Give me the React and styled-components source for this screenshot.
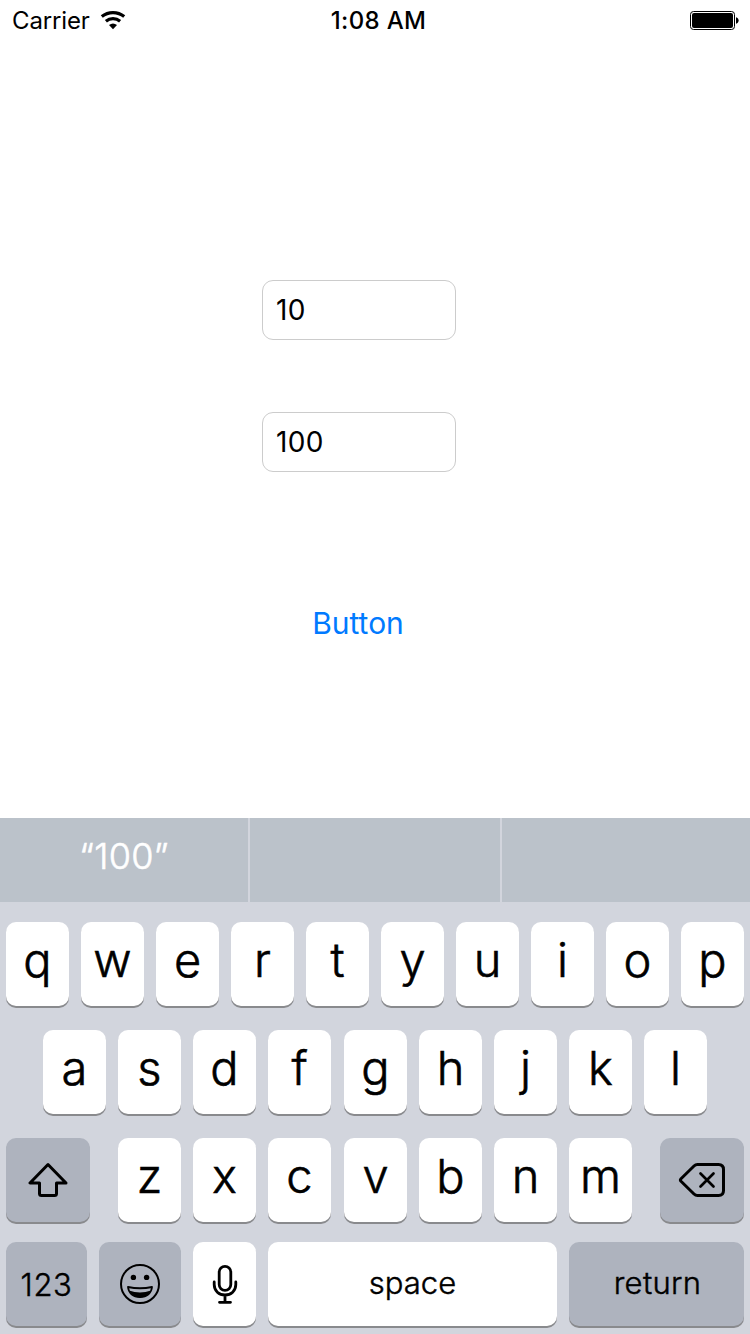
import React from "react";
import styled, { createGlobalStyle, css } from "styled-components";

const GlobalStyle = createGlobalStyle`
  * { box-sizing: border-box; }
  html, body { margin: 0; padding: 0; background: #fff; }
  button, input { font: inherit; color: inherit; margin: 0; border: 0; padding: 0; background: none; }
  svg { display: block; }
`;

const Screen = styled.div`
  width: 750px;
  height: 1334px;
  display: flex;
  flex-direction: column;
  overflow: hidden;
  background: #fff;
  color: #000;
  font-family: Inter, "Liberation Sans", sans-serif;
`;

const StatusBar = styled.header`
  height: 40px;
  display: grid;
  grid-template-columns: 1fr auto 1fr;
  align-items: center;
  padding: 0 11px 0 12px;
  font-size: 24px;
  line-height: 30px;
`;

const Carrier = styled.div`
  display: flex;
  align-items: center;
  gap: 10px;
  letter-spacing: -0.15px;
  padding-top: 2px;

  svg {
    margin-top: -2px;
  }
`;

const Clock = styled.time`
  font-weight: 550;
  letter-spacing: 0.35px;
  padding: 2px 0 0 6px;
`;

const BatterySlot = styled.div`
  display: flex;
  justify-content: flex-end;
  padding-top: 1px;
`;

const Form = styled.main`
  flex: 1;
  display: flex;
  flex-direction: column;
  align-items: center;
  padding: 240px 32px 0 0;
`;

const Field = styled.input`
  width: 194px;
  height: 60px;
  margin-bottom: 72px;
  padding: 0 13px;
  border: 1px solid #ccc;
  border-radius: 11px;
  font-size: 28px;
  letter-spacing: 0.3px;
  outline: none;
`;

const TextButton = styled.button`
  margin: 61px 2px 0 0;
  color: #007aff;
  font-size: 30px;
  line-height: 36px;
`;

const Keyboard = styled.section`
  height: 516px;
  background: #d2d5dd;
`;

const Suggestions = styled.div`
  height: 84px;
  display: grid;
  grid-template-columns: 248px 250px 248px;
  gap: 2px;
`;

const Suggestion = styled.div`
  background: #bbc2ca;
  color: #fff;
  display: flex;
  align-items: center;
  justify-content: center;
  padding-bottom: 8px;
  font-size: 36px;
  font-weight: 300;
  letter-spacing: 0.3px;
  -webkit-text-stroke: 0.6px currentColor;
`;

const Keys = styled.div`
  display: flex;
  flex-direction: column;
  padding-top: 20px;
`;

const Row = styled.div`
  display: flex;
  justify-content: space-between;
  height: 84px;
  padding: 0 ${(p) => p.$inset ?? 6}px;
  margin-bottom: ${(p) => p.$after ?? 24}px;
`;

const Group = styled.div`
  display: flex;
  gap: ${(p) => p.$gap ?? 12}px;
`;

const Key = styled.button`
  width: ${(p) => p.$width ?? 63}px;
  height: 84px;
  display: flex;
  align-items: center;
  justify-content: center;
  border-radius: 10px;
  background: ${(p) => (p.$dark ? "#aeb3be" : "#fff")};
  box-shadow: 0 2px 0 #898a8d;
  ${(p) =>
    p.$label
      ? css`
          font-size: 31px;
          font-weight: 300;
          padding: 0 0 ${p.$lift ?? 3}px ${p.$shift ?? 0}px;
          letter-spacing: ${p.$track ?? 0}px;
          -webkit-text-stroke: 0.45px currentColor;
        `
      : css`
          font-size: 47px;
          font-weight: 300;
          padding-bottom: ${p.$icon ? 0 : 10}px;
          -webkit-text-stroke: 0.6px currentColor;
        `}
`;

const Letters = ({ text }) => (
  <Group>
    {text.split("").map((c) => (
      <Key key={c}>{c}</Key>
    ))}
  </Group>
);

const WifiIcon = () => (
  <svg width="26" height="20" viewBox="0 0.4 26 20" fill="none" stroke="#000">
    <path d="M1.800 7A17.700 17.700 0 0 1 24.200 7" strokeWidth="3.200" />
    <path d="M5.900 11.600A11 11 0 0 1 20.100 11.600" strokeWidth="3.200" />
    <path d="M9 15.400A6.500 6.500 0 0 1 17 15.400L13 19.600Z" fill="#000" stroke="none" />
  </svg>
);

const BatteryIcon = () => (
  <svg width="49" height="19" viewBox="0 0 49 19">
    <rect x="0.500" y="0.500" width="44" height="18" rx="3" fill="none" stroke="#000" />
    <rect x="2" y="2" width="41" height="15" rx="2" />
    <path d="M46 6.200C49.500 6.800 49.500 12.200 46 12.800Z" />
  </svg>
);

const ShiftIcon = () => (
  <svg width="40" height="36" viewBox="0 0 40 36" fill="none" stroke="#000" strokeWidth="3" strokeLinejoin="round">
    <path d="M20 2.500 L2 21 H11.500 V31.500 Q11.500 33.500 13.500 33.500 H26.500 Q28.500 33.500 28.500 31.500 V21 H38 Z" />
  </svg>
);

const DeleteIcon = () => (
  <svg width="48" height="36" viewBox="0 0 48 36" fill="none" stroke="#000" strokeWidth="3" strokeLinecap="round" strokeLinejoin="round">
    <path d="M19.500 2.500H40.500Q45.500 2.500 45.500 7.500V28.500Q45.500 33.500 40.500 33.500H19.500Q17.500 33.500 16 32L3 19.300Q1.800 18 3 16.700L16 4Q17.500 2.500 19.500 2.500Z" />
    <path d="M22.500 11.500 35.500 24.500M35.500 11.500 22.500 24.500" strokeWidth="2.700" />
  </svg>
);

const SmileIcon = () => (
  <svg width="40" height="40" viewBox="0 0 40 40">
    <circle cx="20" cy="20" r="19" fill="none" stroke="#000" strokeWidth="2" />
    <circle cx="13.400" cy="13.400" r="2.700" />
    <circle cx="26.600" cy="13.400" r="2.700" />
    <path d="M8 23Q20 25.500 32 23C31.500 29 27 33 20 33S8.500 29 8 23Z" fill="none" stroke="#000" strokeWidth="1.800" strokeLinejoin="round" />
    <path d="M9 26.500Q20 30.500 31 26.500Q27.500 33.500 20 33.500T9 26.500Z" />
  </svg>
);

const MicIcon = () => (
  <svg width="26" height="40" viewBox="0 0 26 40" fill="none" stroke="#000" strokeWidth="2.800" strokeLinecap="round">
    <rect x="7.200" y="2.400" width="11.600" height="24" rx="5.800" />
    <path d="M2.200 18V20.500C2.200 27 7 31 13 31S23.800 27 23.800 20.500V18M13 31V38M7.500 38.300H18.500" />
  </svg>
);

export default function App() {
  return (
    <Screen>
      <GlobalStyle />
      <StatusBar>
        <Carrier>
          Carrier
          <WifiIcon />
        </Carrier>
        <Clock>1:08 AM</Clock>
        <BatterySlot>
          <BatteryIcon />
        </BatterySlot>
      </StatusBar>
      <Form>
        <Field defaultValue="10" />
        <Field defaultValue="100" />
        <TextButton>Button</TextButton>
      </Form>
      <Keyboard>
        <Suggestions>
          <Suggestion>“100”</Suggestion>
          <Suggestion />
          <Suggestion />
        </Suggestions>
        <Keys>
          <Row>
            <Letters text="qwertyuiop" />
          </Row>
          <Row $inset={43}>
            <Letters text="asdf" />
            <Letters text="ghjkl" />
          </Row>
          <Row $after={20}>
            <Key $dark $icon $width={84} aria-label="shift">
              <ShiftIcon />
            </Key>
            <Group $gap={13}>
              <Letters text="zxc" />
              <Letters text="vbnm" />
            </Group>
            <Key $dark $icon $width={84} aria-label="delete">
              <DeleteIcon />
            </Key>
          </Row>
          <Row>
            <Key $dark $label $width={81} $lift={0} $track={0.6}>123</Key>
            <Key $dark $icon $width={82} aria-label="emoji">
              <SmileIcon />
            </Key>
            <Key $icon aria-label="dictation">
              <MicIcon />
            </Key>
            <Key $label $width={289}>space</Key>
            <Key $dark $label $width={175} $shift={2} $track={0.3}>return</Key>
          </Row>
        </Keys>
      </Keyboard>
    </Screen>
  );
}
